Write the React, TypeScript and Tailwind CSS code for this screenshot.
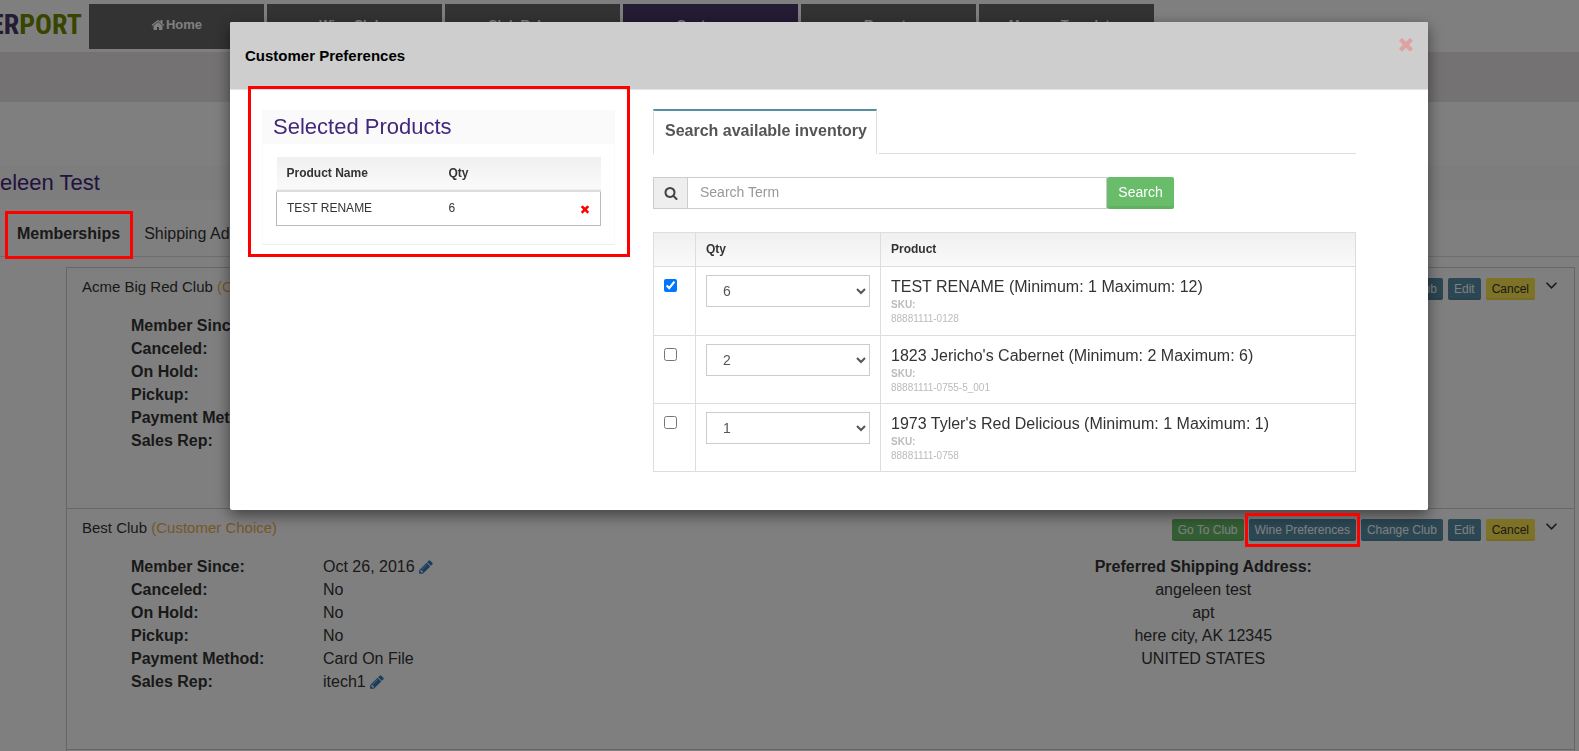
import React, { useState } from 'react';

const ICONS = {
  home: 'M1472 992v480q0 26-19 45t-45 19h-384v-384h-256v384h-384q-26 0-45-19t-19-45v-480q0-1 .5-3t.5-3l575-474 575 474q1 2 1 6zm223-69l-62 74q-8 9-21 11h-3q-13 0-21-7l-692-577-692 577q-12 8-24 7-13-2-21-11l-62-74q-8-10-7-23.5t11-21.5l719-599q32-26 76-26t76 26l244 204v-195q0-14 9-23t23-9h192q14 0 23 9t9 23v408l219 182q10 8 11 21.5t-7 23.5z',
  times:
    'M1490 1322q0 40-28 68l-136 136q-28 28-68 28t-68-28l-294-294-294 294q-28 28-68 28t-68-28l-136-136q-28-28-28-68t28-68l294-294-294-294q-28-28-28-68t28-68l136-136q28-28 68-28t68 28l294 294 294-294q28-28 68-28t68 28l136 136q28 28 28 68t-28 68l-294 294 294 294q28 28 28 68z',
  search:
    'M1216 832q0-185-131.5-316.5t-316.5-131.5-316.5 131.5-131.5 316.5 131.5 316.5 316.5 131.5 316.5-131.5 131.5-316.5zm512 832q0 52-38 90t-90 38q-54 0-90-38l-343-342q-179 124-399 124-143 0-273.5-55.5t-225-150-150-225-55.5-273.5 55.5-273.5 150-225 225-150 273.5-55.5 273.5 55.5 225 150 150 225 55.5 273.5q0 220-124 399l343 343q37 37 37 90z',
  pencil:
    'M491 1536l91-91-235-235-91 91v107h128v128h107zm523-928q0-22-22-22-10 0-17 7l-542 542q-7 7-7 17 0 22 22 22 10 0 17-7l542-542q7-7 7-17zm-54-192l416 416-832 832h-416v-416zm683 96q0 53-37 90l-166 166-416-416 166-165q36-38 90-38 53 0 91 38l235 234q37 39 37 91z',
};

function Icon({ name, className }: { name: keyof typeof ICONS; className: string }) {
  return (
    <svg viewBox="0 0 1792 1792" fill="currentColor" className={className} aria-hidden="true">
      <path d={ICONS[name]} />
    </svg>
  );
}

const navItems = ['Home', 'Wine Clubs', 'Club Releases', 'Customers', 'Reports', 'Manage Templates'];

const products = [
  { id: 1, name: 'TEST RENAME', min: 1, max: 12, sku: '88881111-0128', qty: 6, checked: true },
  { id: 2, name: "1823 Jericho's Cabernet", min: 2, max: 6, sku: '88881111-0755-5_001', qty: 2, checked: false },
  { id: 3, name: "1973 Tyler's Red Delicious", min: 1, max: 1, sku: '88881111-0758', qty: 1, checked: false },
];

type Membership = {
  club: string;
  kind: string;
  address?: string[];
  highlight?: boolean;
};

const memberships: Membership[] = [
  { club: 'Acme Big Red Club', kind: '(Customer Choice)' },
  {
    club: 'Best Club',
    kind: '(Customer Choice)',
    address: ['angeleen test', 'apt', 'here city, AK 12345', 'UNITED STATES'],
    highlight: true,
  },
];

const details = [
  { label: 'Member Since:', value: 'Oct 26, 2016', editable: true },
  { label: 'Canceled:', value: 'No' },
  { label: 'On Hold:', value: 'No' },
  { label: 'Pickup:', value: 'No' },
  { label: 'Payment Method:', value: 'Card On File' },
  { label: 'Sales Rep:', value: 'itech1', editable: true },
];

const smallButton =
  'h-[22px] rounded-xs px-[6px] text-xs leading-5 shadow-[inset_0_-2px_0_rgba(0,0,0,0.05)]';

function TopNav() {
  return (
    <header>
      <div className="flex h-[52px] items-start pt-1">
        <a
          href="#"
          className="flex h-[41px] w-[89px] shrink-0 items-center justify-end overflow-hidden pr-[7px] font-['Liberation_Sans_Narrow','Roboto_Condensed','Liberation_Sans',sans-serif] text-[28px] font-bold text-[#483866]"
        >
          <span>ER</span>
          <span className="text-[#6f8a00]">PORT</span>
        </a>
        <nav className="flex gap-[3px]">
          {navItems.map((item) => (
            <a
              key={item}
              href="#"
              className={`flex h-[45px] w-[175px] items-center justify-center pb-[3px] text-[13px] font-bold text-white ${
                item === 'Customers' ? 'bg-[#483866]' : 'bg-[#666]'
              }`}
            >
              {item === 'Home' && <Icon name="home" className="mr-px size-[14px]" />}
              {item}
            </a>
          ))}
        </nav>
      </div>
      <div className="h-[50px] bg-[#eae4e6]" />
    </header>
  );
}

function MembershipCard({ club, kind, address, highlight }: Membership) {
  return (
    <section className="h-[241px] border border-b-0 border-[#ccc]">
      <div className="flex items-start justify-between pt-[9px] pr-[11px] pl-[15px]">
        <h3 className="text-[15px] leading-5">
          {club} <span className="text-[#f0ad4e]">{kind}</span>
        </h3>
        <div className="flex items-start gap-[5px] pt-px text-white">
          <button className={`${smallButton} bg-[#66bc68]`}>Go To Club</button>
          <div className="relative flex">
            <button className={`${smallButton} bg-[#568ea6]`}>Wine Preferences</button>
            {highlight && (
              <span className="pointer-events-none absolute -inset-x-1 -inset-y-[6px] z-50 border-3 border-[#f00]" />
            )}
          </div>
          <button className={`${smallButton} bg-[#568ea6]`}>Change Club</button>
          <button className={`${smallButton} bg-[#568ea6]`}>Edit</button>
          <button className={`${smallButton} bg-[#fae44a] text-[#333]`}>Cancel</button>
          <button aria-label={`Collapse ${club}`} className="p-1 text-[#333]">
            <svg width="15" height="7" viewBox="0 0 15 7" fill="none" stroke="currentColor" strokeWidth="1.6">
              <path d="M2.5 0.8 L7.5 5.8 L12.5 0.8" />
            </svg>
          </button>
        </div>
      </div>
      <div className="grid grid-cols-2 pt-[14px]">
        <dl className="pl-16">
          {details.map(({ label, value, editable }) => (
            <div key={label} className="flex leading-[23px]">
              <dt className="w-48 font-bold">{label}</dt>
              <dd className="flex items-center">
                {value}
                {editable && <Icon name="pencil" className="ml-[3px] size-4 text-[#337ab7]" />}
              </dd>
            </div>
          ))}
        </dl>
        {address && (
          <address className="pl-3 text-center leading-[23px] not-italic">
            <strong>Preferred Shipping Address:</strong>
            {address.map((line) => (
              <div key={line}>{line}</div>
            ))}
          </address>
        )}
      </div>
    </section>
  );
}

function SelectedProducts() {
  return (
    <div className="mt-[-4px] h-[171px] w-[382px] shrink-0 border-3 border-[#f00] pt-[21px] pr-3 pl-[11px]">
      <div className="h-[135px] border border-[#fafafa] border-b-[#eee]">
        <h2 className="h-[33px] bg-[#fafafa] pl-[10px] text-[22px] leading-8 text-[#43277c]">Selected Products</h2>
        <div className="px-[13px] pt-[13px]">
          <table className="w-full border-collapse text-left text-xs text-[#333]">
            <thead>
              <tr className="h-[34px] border-b-2 border-[#ddd] bg-linear-to-b from-[#f0f0f0] to-[#fafafa]">
                <th className="w-1/2 pb-[2px] pl-[10px]">Product Name</th>
                <th className="pb-[2px] pl-[10px]">Qty</th>
                <th />
              </tr>
            </thead>
            <tbody>
              <tr className="h-[34px] border border-t-0 border-[#bbb]">
                <td className="pb-px pl-[10px]">TEST RENAME</td>
                <td className="pb-px pl-[10px]">6</td>
                <td className="pr-[9px] pb-px text-right">
                  <button aria-label="Remove TEST RENAME" className="align-middle text-[#f00]">
                    <Icon name="times" className="size-3" />
                  </button>
                </td>
              </tr>
            </tbody>
          </table>
        </div>
      </div>
    </div>
  );
}

function InventorySearch() {
  const [term, setTerm] = useState('');

  return (
    <div className="mr-[72px] ml-[23px] min-w-0 flex-1 pt-[19px]">
      <div role="tablist" className="flex">
        <button
          role="tab"
          aria-selected="true"
          className="mr-[2px] h-[45px] border-x border-t-2 border-[#ddd] border-t-[#578ea2] pr-[9px] pb-1 pl-[11px] text-base font-bold text-[#555]"
        >
          Search available inventory
        </button>
        <div className="flex-1 border-b border-[#ddd]" />
      </div>

      <form className="mt-[23px] flex h-8 w-[521px]" onSubmit={(e) => e.preventDefault()}>
        <label
          htmlFor="term"
          aria-label="Search term"
          className="flex w-[34px] items-center justify-center border border-r-0 border-[#ccc] bg-[#eee] text-[#444]"
        >
          <Icon name="search" className="size-[14px]" />
        </label>
        <input
          id="term"
          type="text"
          value={term}
          onChange={(e) => setTerm(e.target.value)}
          placeholder="Search Term"
          className="min-w-0 flex-1 border border-[#ccc] px-3 pb-[2px] text-sm text-[#555] outline-none placeholder:text-[#999]"
        />
        <button
          type="submit"
          className="w-[67px] rounded-xs bg-[#68bc6a] pb-[2px] text-sm text-white shadow-[inset_0_-3px_0_rgba(0,0,0,0.05)]"
        >
          Search
        </button>
      </form>

      <table className="mt-[23px] w-full table-fixed border-collapse text-left text-[#333]">
        <thead>
          <tr className="h-[34px] bg-linear-to-b from-[#f0f0f0] to-[#fafafa] text-xs">
            <th className="w-[42px] border border-[#ddd]" />
            <th className="w-[185px] border border-[#ddd] px-[10px] pb-[2px]">Qty</th>
            <th className="border border-[#ddd] px-[10px] pb-[2px]">Product</th>
          </tr>
        </thead>
        <tbody>
          {products.map((p) => (
            <tr key={p.id} className="h-[68px] align-top first:h-[69px]">
              <td className="border border-[#ddd] px-[10px] pt-3">
                <input type="checkbox" aria-label={p.name} defaultChecked={p.checked} className="block size-[13px]" />
              </td>
              <td className="border border-[#ddd] px-[10px] pt-2">
                <select
                  aria-label={`Quantity of ${p.name}`}
                  defaultValue={p.qty}
                  className="block h-8 w-full border border-[#ccc] bg-white pl-3 text-sm text-[#555]"
                >
                  {Array.from({ length: p.max - p.min + 1 }, (_, i) => (
                    <option key={i}>{p.min + i}</option>
                  ))}
                </select>
              </td>
              <td className="border border-[#ddd] px-[10px] pt-2">
                <div className="text-base leading-[23px]">
                  {p.name} (Minimum: {p.min} Maximum: {p.max})
                </div>
                <div className="text-[10px] leading-[14px] text-[#bbb]">
                  <div className="font-bold">SKU:</div>
                  <div>{p.sku}</div>
                </div>
              </td>
            </tr>
          ))}
        </tbody>
      </table>
    </div>
  );
}

function PreferencesDialog() {
  return (
    <div className="fixed inset-0 z-40 bg-black/50 pt-[22px] pr-[151px] pl-[230px]">
      <div
        role="dialog"
        aria-labelledby="preferences-title"
        className="rounded-xs bg-white pb-[38px] shadow-[0_5px_15px_rgba(0,0,0,0.5)]"
      >
        <div className="flex h-[68px] items-start justify-between rounded-t-xs border-b border-[#e5e5e5] bg-[#cecece] pr-3 pl-[15px]">
          <h1 id="preferences-title" className="pt-6 text-[15px] leading-5 font-bold text-black">
            Customer Preferences
          </h1>
          <button aria-label="Close" className="pt-3 text-[#dfa2a2]">
            <Icon name="times" className="size-5" />
          </button>
        </div>
        <div className="flex items-start pl-[18px]">
          <SelectedProducts />
          <InventorySearch />
        </div>
      </div>
    </div>
  );
}

export default function App() {
  return (
    <div className="h-screen overflow-hidden bg-white font-['Liberation_Sans',Arial,sans-serif] text-[#333]">
      <TopNav />
      <main className="pt-16">
        <h2 className="h-[34px] bg-[#fafafa] text-[22px] leading-[34px] text-[#43277c]">eleen Test</h2>
        <div className="flex h-[57px] items-center border-b border-[#ddd] pt-[11px] pl-[17px]">
          <a href="#" className="relative pr-6 font-bold">
            Memberships
            <span className="pointer-events-none absolute -top-[11px] right-[11px] -bottom-[13px] -left-3 z-50 border-3 border-[#f00]" />
          </a>
          <a href="#">Shipping Addresses</a>
        </div>
        <div className="mt-[10px] mr-1 ml-[66px]">
          {memberships.map((m) => (
            <MembershipCard key={m.club} {...m} />
          ))}
          <div className="h-10 border border-[#ccc]" />
        </div>
      </main>
      <PreferencesDialog />
    </div>
  );
}
